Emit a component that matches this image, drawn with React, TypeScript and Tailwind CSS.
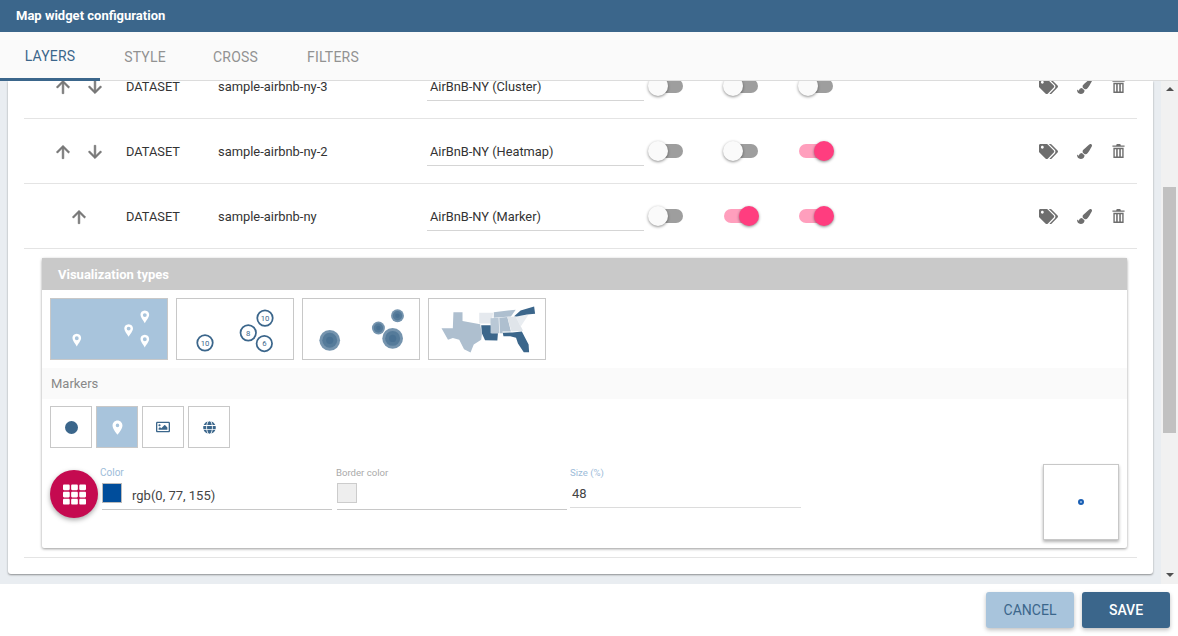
import React from 'react';
import { MdPlace } from 'react-icons/md';
import { FaTags, FaPaintBrush, FaTh, FaGlobe, FaRegImage } from 'react-icons/fa';

const Toggle = ({ on }: { on?: boolean }) => (
  <div className="relative h-[20px] w-[36px] flex items-center">
    <div className={`ml-[1px] h-[14px] w-[34px] rounded-full ${on ? 'bg-[#ff9fbd]' : 'bg-[#9e9e9e]'}`} />
    <div
      className={`absolute top-0 h-[20px] w-[20px] rounded-full shadow-[0_1px_3px_rgba(0,0,0,0.45)] ${
        on ? 'right-0 bg-[#ff3d7f]' : 'left-0 bg-[#fafafa]'
      }`}
    />
  </div>
);

const TrashIcon = () => (
  <svg className="ml-[20px] h-[14px] w-[13px]" viewBox="0 0 13 15" fill="#6e6e6e">
    <path d="M0 1.5H4L4.6 0H8.4L9 1.5H13V3H0Z" />
    <path fillRule="evenodd" d="M1 4H12V15H1ZM2.5 5.5V13.5H4V5.5ZM5.7 5.5V13.5H7.3V5.5ZM9 5.5V13.5H10.5V5.5Z" />
  </svg>
);

const Arrow = ({ down }: { down?: boolean }) => (
  <svg className={`h-[20px] w-[20px] ${down ? 'rotate-180' : ''}`} viewBox="0 0 24 24" fill="#777" stroke="#777" strokeWidth="0.7">
    <path d="M4 12l1.41 1.41L11 7.83V20h2V7.83l5.58 5.59L20 12l-8-8-8 8z" />
  </svg>
);

const LayerRow = ({ name, title, up = true, down = true, toggles }: { name: string; title: string; up?: boolean; down?: boolean; toggles: boolean[] }) => (
  <div className="flex h-[65px] shrink-0 items-center border-b border-[#e4e4e4] pt-[2px] text-[13px] leading-[10px] text-[#333]">
    <div className="flex w-[102px] items-center justify-center gap-[12px] pl-[8px]">
      {up && <Arrow />}
      {down && <Arrow down />}
    </div>
    <div className="w-[92px] text-[12.8px]">DATASET</div>
    <div className="w-[209px] text-[12.9px]">{name}</div>
    <div className="flex h-[28px] w-[217px] items-center border-b border-[#d5d5d5] pl-[3px] text-[12.8px]">{title}</div>
    <div className="mb-[2px] ml-[4px] flex w-[391px] gap-[39px]">
      {toggles.map((on, i) => (
        <Toggle key={i} on={on} />
      ))}
    </div>
    <div className="mb-[2px] flex items-center text-[#6e6e6e]">
      <FaTags className="h-[17px] w-[19px]" />
      <FaPaintBrush className="ml-[19px] h-[15px] w-[15px]" />
      <TrashIcon />
    </div>
  </div>
);

const Pin = ({ x, y }: { x: number; y: number }) => (
  <path
    transform={`translate(${x} ${y})`}
    fillRule="evenodd"
    fill="#fff"
    d="M0-7C-3-7-4.5-4.7-4.5-2.6-4.5 0-1.5 3.5 0 6 1.5 3.5 4.5 0 4.5-2.6 4.5-4.7 3-7 0-7ZM0-4.4A2 2 0 1 1 0-.4 2 2 0 1 1 0-4.4Z"
  />
);

const Cluster = ({ x, y, n }: { x: number; y: number; n: string }) => (
  <g>
    <circle cx={x} cy={y} r="8" fill="#fff" stroke="#3b668b" strokeWidth="1.8" />
    <text x={x} y={y + 2.8} fontSize="8" fill="#3b668b" textAnchor="middle" fontFamily="Roboto">
      {n}
    </text>
  </g>
);

const Bubble = ({ x, y, r }: { x: number; y: number; r: number }) => (
  <g fill="#3b668b">
    <circle cx={x} cy={y} r={r} opacity="0.7" />
    <circle cx={x} cy={y} r={r * 0.72} opacity="0.55" />
    <circle cx={x} cy={y} r={r * 0.35} opacity="0.45" />
  </g>
);

const thumb = 'h-[62px] w-[118px] border border-[#c8c8c8]';
const markerBtn = 'flex h-[42px] w-[42px] items-center justify-center border border-[#c8c8c8] text-[#3b668b]';

export default function App() {
  return (
    <div className="flex h-[636px] w-[1178px] flex-col overflow-hidden bg-white font-['Roboto',sans-serif]">
      <div className="flex h-[32px] shrink-0 items-center bg-[#3b668b] pl-[16px] text-[13px] font-bold text-white">
        Map widget configuration
      </div>
      <div className="z-10 flex h-[49px] shrink-0 border-b border-[#dcdcdc] bg-[#fafafa] text-[14px] tracking-[0.2px] text-[#929292]">
        <div className="-mb-px flex w-[100px] items-center justify-center border-b-[3px] border-[#3b668b] pt-[2px] text-[#3b668b]">LAYERS</div>
        <div className="flex w-[90px] items-center justify-center pt-[2px]">STYLE</div>
        <div className="flex w-[91px] items-center justify-center pt-[2px]">CROSS</div>
        <div className="flex w-[104px] items-center justify-center pt-[2px]">FILTERS</div>
      </div>

      <div className="flex h-[503px] shrink-0 bg-[#e9edf1]">
        <div className="ml-[8px] mr-[8px] h-[493px] w-[1145px] shrink-0 overflow-hidden rounded-b-[3px] bg-white shadow-[0_1px_2px_rgba(0,0,0,0.4)]">
          <div className="-mt-[27px] px-[16px]">
            <LayerRow name="sample-airbnb-ny-3" title="AirBnB-NY (Cluster)" toggles={[false, false, false]} />
            <LayerRow name="sample-airbnb-ny-2" title="AirBnB-NY (Heatmap)" toggles={[false, false, true]} />
            <LayerRow name="sample-airbnb-ny" title="AirBnB-NY (Marker)" up down={false} toggles={[false, true, true]} />

            <div className="border-b border-[#e4e4e4] pb-[9px] pl-[18px] pr-[10px] pt-[9px]">
              <div className="h-[290px] rounded-[2px] bg-white shadow-[0_1px_3px_rgba(0,0,0,0.4)]">
                <div className="flex h-[32px] items-center bg-[#c9c9c9] pl-[16px] pt-[1px] text-[13px] font-bold text-white">Visualization types</div>
                <div className="flex gap-[8px] px-[8px] pt-[8px]">
                  <svg className={`${thumb} bg-[#a8c4dc]`} viewBox="0 0 118 62">
                    <Pin x={25.7} y={43} />
                    <Pin x={79.3} y={33} />
                    <Pin x={96} y={19} />
                    <Pin x={96} y={44} />
                  </svg>
                  <svg className={thumb} viewBox="0 0 118 62">
                    <Cluster x={28} y={45.3} n="10" />
                    <Cluster x={89.3} y={46} n="6" />
                    <Cluster x={90} y={19.7} n="10" />
                    <Cluster x={72.7} y={35} n="8" />
                  </svg>
                  <svg className={thumb} viewBox="0 0 118 62">
                    <Bubble x={26.7} y={42.7} r={10.7} />
                    <Bubble x={77} y={30} r={6.7} />
                    <Bubble x={96.7} y={17.3} r={6.7} />
                    <Bubble x={91.7} y={40.7} r={10.7} />
                  </svg>
                  <svg className={thumb} viewBox="0 0 118 62">
                    {/* southern states */}
                    <path fill="#aebfcf" d="M24.3 13.7H33.7V22.7L52 26 53.7 37 53 42 45.3 47 42 55.3 35.3 52 30.3 42 23.7 40.3 18.7 42 12 30.3H23.7Z" />
                    <path fill="#e5e9ee" d="M51 14.3H65.3L63.7 25.3H51Z" />
                    <path fill="#3b668b" d="M53 27H63L63.7 35.3H70.3L69.7 43 57 42.5 53.7 35.3Z" />
                    <path fill="#aebfcf" d="M66 13.7 88.7 11 83.7 18 66 19.3Z" />
                    <path fill="#b9c8d6" d="M62.7 20 71 19.3 71.7 35.3H62.7Z" />
                    <path fill="#aebfcf" d="M71.7 19.3 80 18.7 83.7 33.7H75L75.3 35.3H72.3Z" />
                    <path fill="#e0e5ea" d="M80 18.7 88.7 18 96.3 32.7 84.3 33.7Z" />
                    <path fill="#e9edf1" d="M88.7 18 102 16 93.7 28.7Z" />
                    <path fill="#3b668b" d="M87 17.7 93.7 12 107.7 7.7 108.7 15.3 100.3 16 89.7 18Z" />
                    <path fill="#3b668b" d="M75.3 35 85.3 34.5 95 33.7 102 47 102.5 55 97 55 91 46 89 40 83 38.5 76 38.5Z" />
                  </svg>
                </div>
                <div className="mt-[8px] flex h-[31px] items-center bg-[#fafafa] pl-[9px] text-[13px] text-[#888]">Markers</div>
                <div className="flex gap-[4px] px-[8px] pt-[7px]">
                  <div className={markerBtn}>
                    <div className="h-[13px] w-[13px] rounded-full bg-[#3b668b]" />
                  </div>
                  <div className={`${markerBtn} bg-[#a8c4dc]`}>
                    <MdPlace className="h-[17px] w-[17px] text-white" />
                  </div>
                  <div className={markerBtn}>
                    <FaRegImage className="h-[14px] w-[14px]" />
                  </div>
                  <div className={markerBtn}>
                    <FaGlobe className="h-[13px] w-[13px]" />
                  </div>
                </div>
                <div className="flex items-start pl-[8px] pt-[16px]">
                  <div className="mt-[6px] flex h-[48px] w-[48px] shrink-0 items-center justify-center rounded-full bg-[#c50a50] shadow-[0_2px_5px_rgba(0,0,0,0.35)]">
                    <FaTh className="h-[23px] w-[23px] text-white" />
                  </div>
                  <div className="ml-[4px] w-[230px] shrink-0">
                    <div className="-ml-[2px] h-[14px] pt-[4px] text-[10px] leading-[10px] text-[#9dbcd9]">Color</div>
                    <div className="mt-[5px] flex h-[27px] border-b border-[#c8c8c8] text-[13px] text-[#444]">
                      <div className="h-[20px] w-[20px] border border-[#bbb] bg-[#004d9b]" />
                      <div className="ml-[10px] mt-[3px]">rgb(0, 77, 155)</div>
                    </div>
                  </div>
                  <div className="ml-[5px] w-[230px] shrink-0">
                    <div className="-ml-[1px] h-[14px] pt-[4px] text-[9.6px] leading-[10px] text-[#aaa]">Border color</div>
                    <div className="mt-[5px] h-[27px] border-b border-[#c8c8c8]">
                      <div className="h-[20px] w-[20px] border border-[#ccc] bg-[#eeeeee]" />
                    </div>
                  </div>
                  <div className="ml-[3px] w-[231px] shrink-0">
                    <div className="h-[14px] pt-[4px] text-[9.6px] leading-[10px] text-[#9dbcd9]">Size (%)</div>
                    <div className="mt-[3px] h-[27px] border-b border-[#dcdcdc] pl-[2px] pt-[3px] text-[13px] text-[#444]">48</div>
                  </div>
                  <div className="ml-[242px] flex h-[76px] w-[76px] shrink-0 items-center justify-center border border-[#c8c8c8] bg-white shadow-[0_2px_3px_rgba(0,0,0,0.3)]">
                    <div className="h-[6px] w-[6px] rounded-full border-[2px] border-[#1a5fb4] bg-[#9fc0e6]" />
                  </div>
                </div>
              </div>
            </div>
          </div>
        </div>

        <div className="flex h-[503px] w-[17px] shrink-0 flex-col items-center bg-[#f1f1f1]">
          <div className="mt-[6px] h-0 w-0 border-x-[4px] border-b-[4px] border-x-transparent border-b-[#505050]" />
          <div className="mt-[96px] h-[246px] w-[13px] bg-[#c1c1c1]" />
          <div className="mt-[140px] h-0 w-0 border-x-[4px] border-t-[4px] border-x-transparent border-t-[#505050]" />
        </div>
      </div>

      <div className="flex flex-1 justify-end gap-[8px] bg-white pr-[8px] pt-[8px] text-[14px]">
        <div className="flex h-[36px] w-[88px] items-center justify-center rounded-[3px] bg-[#a8c4dc] text-[#3b668b] shadow-[0_2px_4px_rgba(0,0,0,0.25)]">CANCEL</div>
        <div className="flex h-[36px] w-[88px] items-center justify-center rounded-[3px] bg-[#3b668b] font-medium text-white shadow-[0_2px_4px_rgba(0,0,0,0.25)]">SAVE</div>
      </div>
    </div>
  );
}
